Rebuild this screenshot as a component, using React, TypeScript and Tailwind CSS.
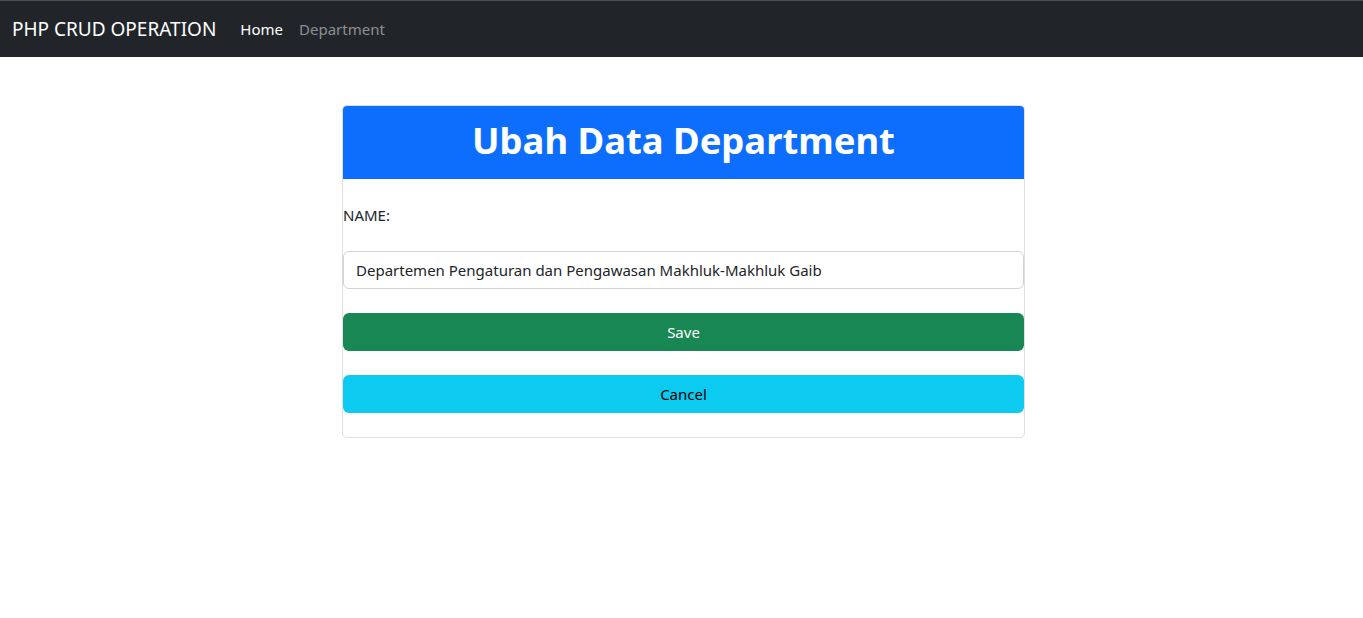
import React from 'react';

const App: React.FC = () => {
  return (
    <div className="min-h-[618px] bg-white text-[#212529]" style={{ fontFamily: '"Noto Sans", "Open Sans", sans-serif' }}>
      {/* Navbar */}
      <div className="h-px bg-[#505050]" />
      <nav className="h-[56px] bg-[#212529] flex items-center px-3">
        <span className="text-[19px] text-white mr-6">PHP CRUD OPERATION</span>
        <a className="text-[15px] text-white mr-4">Home</a>
        <a className="text-[15px] text-[#8c8f93]">Department</a>
      </nav>

      {/* Card */}
      <div className="flex justify-center pl-[4px] pt-[48px]">
        <div className="w-[683px] border border-[#dfdfdf] rounded-[5px] overflow-hidden">
          <div className="h-[73px] bg-[#0d6efd] flex items-center justify-center pb-[4px]">
            <h1 className="text-[36.4px] font-bold text-white leading-none">Ubah Data Department</h1>
          </div>
          <div className="pt-[24px] pb-[24px] flex flex-col">
            <label className="text-[15px] leading-6 h-6">NAME:</label>
            <input
              className="mt-[24px] h-[38px] w-full border border-[#ced4da] rounded-[6px] px-3 text-[15px] text-[#212529] outline-none"
              defaultValue="Departemen Pengaturan dan Pengawasan Makhluk-Makhluk Gaib"
            />
            <button className="mt-[24px] h-[38px] w-full rounded-[6px] bg-[#198754] text-white text-[15px]">Save</button>
            <button className="mt-[24px] h-[38px] w-full rounded-[6px] bg-[#0dcaf0] text-black text-[15px]">Cancel</button>
          </div>
        </div>
      </div>
    </div>
  );
};

export default App;
